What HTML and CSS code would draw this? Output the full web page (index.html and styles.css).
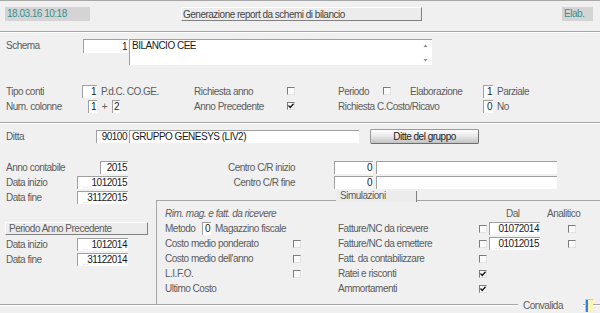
FILE: index.html
```html
<!DOCTYPE html>
<html lang="it">
<head>
  <meta charset="UTF-8">
  <meta name="viewport" content="width=device-width, initial-scale=1.0">
  <title>Generazione report da schemi di bilancio</title>
  <link rel="stylesheet" href="styles.css">
</head>
<body>
  <div class="window">
    <!-- Barra superiore -->
    <div class="topbar">
      <div class="stamp">18.03.16 10:18</div>
      <div class="btn title-btn">Generazione report da schemi di bilancio</div>
      <div class="stamp elab">Elab.</div>
    </div>
    <div class="sep sep-top"></div>

    <!-- Schema -->
    <div class="schema">
      <span class="lbl schema-lbl">Schema</span>
      <span class="field schema-num">1</span>
      <div class="memo">
        <span class="memo-text">BILANCIO CEE</span>
        <svg class="memo-scroll" width="7" height="24" viewBox="0 0 7 24">
          <path d="M1.5 6 L3.5 3.5 L5.5 6 Z" fill="#8c8c8c"/>
          <path d="M1.5 18 L3.5 20.5 L5.5 18 Z" fill="#8c8c8c"/>
        </svg>
      </div>
    </div>

    <!-- Opzioni -->
    <div class="opts">
      <div class="row opt-row">
        <span class="lbl c-tipo">Tipo conti</span>
        <span class="field f-tipo">1</span>
        <span class="lbl c-pdc">P.d.C. CO.GE.</span>
        <span class="lbl c-rich">Richiesta anno</span>
        <span class="check"></span>
        <span class="lbl c-per">Periodo</span>
        <span class="check"></span>
        <span class="lbl c-elab">Elaborazione</span>
        <span class="field f-small">1</span>
        <span class="lbl c-after">Parziale</span>
      </div>
      <div class="row opt-row">
        <span class="lbl c-col">Num. colonne</span>
        <span class="field f-col1">1</span>
        <span class="lbl c-plus">+</span>
        <span class="field f-col2">2</span>
        <span class="lbl c-prec">Anno Precedente</span>
        <span class="check checked">
          <svg width="6" height="6" viewBox="0 0 6 6"><path d="M0.5 2.5 L2.3 4.5 L5.5 0.8" fill="none" stroke="#111" stroke-width="1.3"/></svg>
        </span>
        <span class="lbl c-cc">Richiesta C.Costo/Ricavo</span>
        <span class="field f-small">0</span>
        <span class="lbl c-after">No</span>
      </div>
    </div>
    <div class="sep sep-mid"></div>

    <!-- Ditta -->
    <div class="row ditta">
      <span class="lbl c-ditta">Ditta</span>
      <span class="field f-ditta">90100</span>
      <span class="field f-ragsoc">GRUPPO GENESYS (LIV2)</span>
      <span class="btn-raised">Ditte del gruppo</span>
    </div>

    <!-- Periodo e simulazioni -->
    <div class="lower">
      <div class="lower-left">
        <div class="row">
          <span class="lbl c-anno">Anno contabile</span>
          <span class="field f-anno">2015</span>
        </div>
        <div class="row">
          <span class="lbl c-data">Data inizio</span>
          <span class="field date">1012015</span>
        </div>
        <div class="row">
          <span class="lbl c-data">Data fine</span>
          <span class="field date">31122015</span>
        </div>
        <div class="btn prev-btn">Periodo Anno Precedente</div>
        <div class="row">
          <span class="lbl c-data">Data inizio</span>
          <span class="field date">1012014</span>
        </div>
        <div class="row">
          <span class="lbl c-data">Data fine</span>
          <span class="field date">31122014</span>
        </div>
      </div>

      <div class="lower-right">
        <div class="row">
          <span class="lbl c-centro">Centro C/R inizio</span>
          <span class="field f-centro">0</span>
          <span class="field f-centro-desc"></span>
        </div>
        <div class="row">
          <span class="lbl c-centro">Centro C/R fine</span>
          <span class="field f-centro">0</span>
          <span class="field f-centro-desc"></span>
        </div>

        <div class="frame">
          <div class="tab">Simulazioni</div>
          <div class="frame-cols">
            <div class="frame-left">
              <div class="frow"><span class="lbl subtitle">Rim. mag. e fatt. da ricevere</span></div>
              <div class="frow">
                <span class="lbl c-metodo">Metodo</span>
                <span class="field f-col1">0</span>
                <span class="lbl c-after">Magazzino fiscale</span>
              </div>
              <div class="frow"><span class="lbl c-rim">Costo medio ponderato</span><span class="check"></span></div>
              <div class="frow"><span class="lbl c-rim">Costo medio dell'anno</span><span class="check"></span></div>
              <div class="frow"><span class="lbl c-rim">L.I.F.O.</span><span class="check"></span></div>
              <div class="frow"><span class="lbl c-rim">Ultimo Costo</span></div>
            </div>

            <div class="frame-right">
              <div class="frow">
                <span class="lbl c-dal">Dal</span>
                <span class="lbl">Analitico</span>
              </div>
              <div class="frow">
                <span class="lbl c-sim">Fatture/NC da ricevere</span>
                <span class="check"></span>
                <span class="field date f-dal">01072014</span>
                <span class="check c-anal"></span>
              </div>
              <div class="frow">
                <span class="lbl c-sim">Fatture/NC da emettere</span>
                <span class="check"></span>
                <span class="field date f-dal">01012015</span>
                <span class="check c-anal"></span>
              </div>
              <div class="frow">
                <span class="lbl c-sim">Fatt. da contabilizzare</span>
                <span class="check"></span>
              </div>
              <div class="frow">
                <span class="lbl c-sim">Ratei e risconti</span>
                <span class="check checked">
                  <svg width="6" height="6" viewBox="0 0 6 6"><path d="M0.5 2.5 L2.3 4.5 L5.5 0.8" fill="none" stroke="#111" stroke-width="1.3"/></svg>
                </span>
              </div>
              <div class="frow">
                <span class="lbl c-sim">Ammortamenti</span>
                <span class="check checked">
                  <svg width="6" height="6" viewBox="0 0 6 6"><path d="M0.5 2.5 L2.3 4.5 L5.5 0.8" fill="none" stroke="#111" stroke-width="1.3"/></svg>
                </span>
              </div>
            </div>
          </div>
        </div>
      </div>
    </div>

    <!-- Convalida -->
    <div class="footer">
      <span class="rule rule-main"></span>
      <span class="lbl convalida">Convalida</span>
      <span class="rule rule-short"></span>
      <span class="status-icon">
        <svg width="8" height="13" viewBox="0 0 8 13">
          <rect x="0" y="0" width="8" height="13" fill="#c8c8c8"/>
          <rect x="1" y="1" width="7" height="12" fill="#fdf4b4"/>
          <rect x="1" y="1" width="2" height="12" fill="#2f7fe0"/>
        </svg>
      </span>
      <span class="rule rule-end"></span>
    </div>
  </div>
</body>
</html>
```

FILE: styles.css
```css
/* Reset */
* {
  margin: 0;
  padding: 0;
  box-sizing: border-box;
}

body {
  font-family: "Liberation Sans", Arial, sans-serif;
  font-size: 10px;
  letter-spacing: -0.5px;
  color: #5c5c5c;
  background-color: #f0f0f0;
  overflow: hidden;
}

.window {
  width: 600px;
  height: 313px;
  border-top: 1px solid #a8a8a8;
}

/* Common pieces */
.row {
  display: flex;
  align-items: center;
  height: 13px;
}

.lbl {
  display: block;
  white-space: nowrap;
  line-height: 13px;
  flex: none;
}

.field {
  display: block;
  flex: none;
  height: 13px;
  line-height: 12px;
  background: #fff;
  border-top: 1px solid #a0a0a0;
  border-left: 1px solid #a0a0a0;
  color: #1a1a1a;
  text-align: right;
  padding-right: 1px;
  white-space: nowrap;
}

.field.date {
  position: relative;
  width: 51px;
}

.field.date::before {
  content: ". .";
  position: absolute;
  left: 5px;
  bottom: 0;
  font-size: 7px;
  line-height: 7px;
  color: #b0b0b0;
}

.check {
  display: flex;
  align-items: center;
  justify-content: center;
  flex: none;
  width: 8px;
  height: 8px;
  background: #fafafa;
  border-top: 1px solid #7c7c7c;
  border-left: 1px solid #7c7c7c;
  border-right: 1px solid #e2e2e2;
  border-bottom: 1px solid #e2e2e2;
}

.btn {
  height: 14px;
  line-height: 13px;
  background: #ececec;
  border-top: 1px solid #fff;
  border-left: 1px solid #fff;
  border-right: 1px solid #808080;
  border-bottom: 1px solid #808080;
  color: #444;
  white-space: nowrap;
}

.sep {
  height: 2px;
  border-top: 1px solid #a6a6a6;
  border-bottom: 1px solid #fff;
}

/* Top bar */
.topbar {
  display: flex;
  height: 14px;
  margin-top: 6px;
}

.stamp {
  width: 85px;
  margin-left: 5px;
  line-height: 14px;
  padding-left: 2px;
  background: #d4d4d4;
  color: #379090;
}

.title-btn {
  width: 241px;
  margin-left: 91px;
  padding-left: 1px;
}

.stamp.elab {
  width: 31px;
  margin-left: 140px;
}

.sep-top {
  margin-top: 10px;
}

/* Schema */
.schema {
  display: flex;
  margin-top: 6px;
  padding-left: 6px;
  height: 26px;
}

.schema-lbl {
  width: 77px;
}

.schema-num {
  width: 45px;
  height: 14px;
  line-height: 13px;
}

.memo {
  display: flex;
  justify-content: space-between;
  width: 303px;
  height: 26px;
  margin-left: 1px;
  background: #fff;
  border-top: 1px solid #a0a0a0;
  border-left: 1px solid #a0a0a0;
  color: #1a1a1a;
  padding-left: 2px;
  padding-right: 3px;
}

.memo-text {
  line-height: 12px;
}

.memo-scroll {
  margin-top: 1px;
}

/* Options */
.opts {
  margin-top: 19px;
  padding-left: 6px;
}

.opt-row {
  height: 14px;
}

.opt-row + .opt-row {
  margin-top: 1px;
}

.c-tipo { width: 76px; }
.f-tipo { width: 15px; }
.c-pdc { width: 93px; margin-left: 4px; }
.c-rich { width: 93px; }
.c-per { width: 45px; margin-left: 43px; }
.c-elab { width: 73px; margin-left: 19px; }
.f-small { width: 10px; }
.c-after { margin-left: 4px; }
.c-col { width: 82px; }
.f-col1 { width: 9px; }
.c-plus { width: 15px; text-align: center; }
.f-col2 { width: 8px; }
.c-prec { width: 93px; margin-left: 74px; }
.c-cc { width: 145px; margin-left: 43px; }

.sep-mid {
  margin-top: 9px;
}

/* Ditta */
.ditta {
  margin-top: 5px;
  padding-left: 6px;
  height: 15px;
}

.c-ditta { width: 90px; }
.f-ditta { width: 32px; }

.f-ragsoc {
  width: 230px;
  margin-left: 1px;
  text-align: left;
  padding-left: 2px;
}

.btn-raised {
  display: block;
  width: 109px;
  height: 15px;
  line-height: 13px;
  margin-left: 11px;
  text-align: center;
  color: #1e1e1e;
  background: linear-gradient(to bottom, #ffffff, #e6e6e6 50%, #c2c2c2);
  border: 1px solid #9a9a9a;
  border-right-color: #6e6e6e;
  border-bottom-color: #6e6e6e;
  border-radius: 2px;
}

/* Lower part */
.lower {
  display: flex;
  margin-top: 17px;
}

.lower-left {
  width: 156px;
  padding-left: 6px;
}

.lower-left .row + .row {
  margin-top: 2px;
}

.c-anno { width: 94px; }
.f-anno { width: 28px; }
.c-data { width: 71px; }

.prev-btn {
  width: 143px;
  height: 13px;
  line-height: 11px;
  margin-top: 18px;
  margin-left: -1px;
  margin-bottom: 3px;
  padding-left: 3px;
  color: #5c5c5c;
}

.lower-right {
  flex: 1;
}

.lower-right > .row + .row {
  margin-top: 2px;
}

.c-centro {
  width: 139px;
  text-align: right;
}

.f-centro {
  width: 39px;
  margin-left: 39px;
}

.f-centro-desc {
  width: 181px;
  margin-left: 3px;
}

/* Simulazioni frame */
.frame {
  position: relative;
  margin-top: 11px;
  height: 105px;
  border-top: 1px solid #a6a6a6;
  border-left: 1px solid #a6a6a6;
  padding-top: 5px;
}

.tab {
  position: absolute;
  top: -10px;
  left: 179px;
  width: 81px;
  height: 11px;
  line-height: 10px;
  padding-left: 4px;
  background: #ececec;
  border-right: 1px solid #808080;
  color: #5c5c5c;
}

.frame-cols {
  display: flex;
}

.frame-left {
  width: 181px;
  padding-left: 8px;
}

.frame-right {
  flex: 1;
}

.frow {
  display: flex;
  align-items: center;
  height: 15px;
}

.subtitle {
  font-style: italic;
  color: #606060;
}

.c-metodo { width: 37px; }
.c-rim { width: 128px; }
.c-sim { width: 141px; }
.c-dal { width: 41px; margin-left: 168px; }

.f-dal {
  width: 52px;
  margin-left: 2px;
}

.c-anal {
  margin-left: 28px;
}

/* Footer */
.footer {
  display: flex;
  align-items: center;
  height: 14px;
  margin-top: -7px;
}

.rule {
  display: block;
  height: 2px;
  border-top: 1px solid #a6a6a6;
  border-bottom: 1px solid #fff;
}

.rule-main {
  width: 518px;
}

.convalida {
  width: 40px;
  margin-left: 5px;
}

.rule-short {
  width: 2px;
  margin-left: 20px;
}

.status-icon {
  display: block;
  height: 13px;
}

.status-icon svg {
  display: block;
}

.rule-end {
  flex: 1;
}
```
